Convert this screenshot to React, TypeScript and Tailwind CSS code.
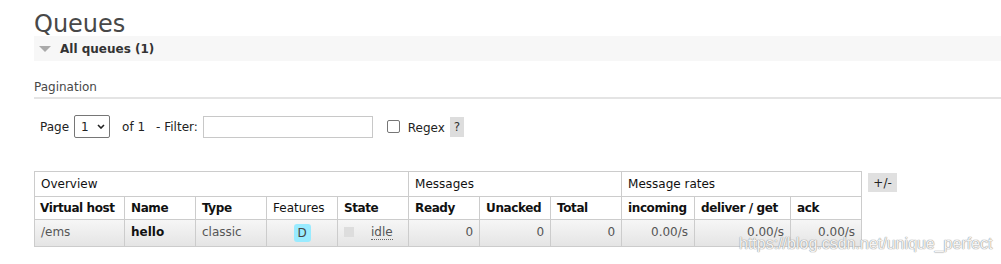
import React from 'react'

const cols = [90, 71, 71, 71, 71, 71, 71, 71, 73, 96, 71]

export default function App() {
    return (
        <div className="relative w-[1001px] h-[264px] overflow-hidden bg-white font-['DejaVu_Sans','Verdana',sans-serif] text-[12px] text-[#484848]">
            <div className="pl-[34px]">
                {/* Page title */}
                <h1 className="pt-[10px] text-[24px] leading-[28px] text-[#484848]">Queues</h1>

                {/* Section header */}
                <div className="mt-[-2px] flex h-[25px] items-center bg-[#f7f7f7] pl-[5px]">
                    <svg width="12" height="6" viewBox="0 0 12 6" className="mt-[1px]">
                        <path d="M0 0 L12 0 L6 6 Z" fill="#aaaaaa" />
                    </svg>
                    <span className="ml-[9px] font-bold text-[12px] text-[#333]">All queues (1)</span>
                </div>

                {/* Pagination */}
                <div className="mt-[19px] border-b-2 border-[#e4e4e4] pb-[3px] leading-[14px] text-[#484848]">Pagination</div>

                <div className="mt-[16px] flex h-[23px] items-center pl-[6px] text-[#222]">
                    <span>Page</span>
                    <div className="ml-[5px] flex h-[23px] w-[36px] items-center rounded-[2px] border border-[#767676] bg-white pl-[6px]">
                        <span>1</span>
                        <svg width="8" height="5" viewBox="0 0 8 5" className="ml-[8px]">
                            <path d="M1 1 L4 4 L7 1" fill="none" stroke="#222" strokeWidth="1.6" />
                        </svg>
                    </div>
                    <span className="ml-[12px]">of 1</span>
                    <span className="ml-[11px]">- Filter:</span>
                    <div className="ml-[5px] h-[22px] w-[170px] border border-[#c8c8c8] bg-white" />
                    <div className="ml-[14px] h-[13px] w-[13px] rounded-[2px] border border-[#767676] bg-white" />
                    <span className="ml-[8px] mt-[3px]">Regex</span>
                    <span className="ml-[5px] flex h-[20px] w-[14px] items-center justify-center bg-[#dddddd] text-[#333]">?</span>
                </div>

                {/* Table */}
                <div className="mt-[33px] flex items-start">
                    <table className="table-fixed border-collapse whitespace-nowrap" style={{ width: 828 }}>
                        <colgroup>
                            {cols.map((w, i) => (
                                <col key={i} style={{ width: w }} />
                            ))}
                        </colgroup>
                        <thead>
                            <tr className="h-[25px]">
                                <th colSpan={5} className="border border-[#cccccc] px-[6px] text-left font-normal text-[#111]">Overview</th>
                                <th colSpan={3} className="border border-[#cccccc] px-[6px] text-left font-normal text-[#111]">Messages</th>
                                <th colSpan={3} className="border border-[#cccccc] px-[6px] text-left font-normal text-[#111]">Message rates</th>
                            </tr>
                            <tr className="h-[23px] text-[#111] tracking-[-0.4px]">
                                <th className="border border-[#cccccc] pl-[5px] pr-0 text-left font-bold">Virtual host</th>
                                <th className="border border-[#cccccc] px-[6px] text-left font-bold">Name</th>
                                <th className="border border-[#cccccc] px-[6px] text-left font-bold">Type</th>
                                <th className="border border-[#cccccc] px-[6px] text-left font-normal tracking-normal">Features</th>
                                <th className="border border-[#cccccc] px-[6px] text-left font-bold">State</th>
                                <th className="border border-[#cccccc] px-[6px] text-left font-bold">Ready</th>
                                <th className="border border-[#cccccc] px-[6px] text-left font-bold">Unacked</th>
                                <th className="border border-[#cccccc] px-[6px] text-left font-bold">Total</th>
                                <th className="border border-[#cccccc] px-[6px] text-left font-bold">incoming</th>
                                <th className="border border-[#cccccc] px-[6px] text-left font-bold">deliver / get</th>
                                <th className="border border-[#cccccc] px-[6px] text-left font-bold">ack</th>
                            </tr>
                        </thead>
                        <tbody>
                            <tr className="h-[27px] bg-gradient-to-b from-[#f6f6f6] to-[#e4e4e4] text-[#555]">
                                <td className="border border-[#cccccc] px-[6px] pb-[3px]">/ems</td>
                                <td className="border border-[#cccccc] px-[6px] pb-[3px] font-bold text-[#111]">hello</td>
                                <td className="border border-[#cccccc] px-[6px] pb-[3px]">classic</td>
                                <td className="border border-[#cccccc] text-center">
                                    <span className="inline-flex h-[18px] w-[17px] items-center justify-center rounded-[3px] bg-[#99ebff] text-[#444]">D</span>
                                </td>
                                <td className="border border-[#cccccc] px-[6px] pb-[2px]">
                                    <div className="flex items-center">
                                        <span className="h-[10px] w-[10px] bg-[#dddddd]" />
                                        <span className="ml-[17px] border-b border-dotted border-[#666] leading-[14px]">idle</span>
                                    </div>
                                </td>
                                <td className="border border-[#cccccc] px-[6px] pb-[3px] text-right">0</td>
                                <td className="border border-[#cccccc] px-[6px] pb-[3px] text-right">0</td>
                                <td className="border border-[#cccccc] px-[6px] pb-[3px] text-right">0</td>
                                <td className="border border-[#cccccc] px-[6px] pb-[3px] text-right">0.00/s</td>
                                <td className="border border-[#cccccc] px-[6px] pb-[3px] text-right">0.00/s</td>
                                <td className="border border-[#cccccc] px-[6px] pb-[3px] text-right">0.00/s</td>
                            </tr>
                        </tbody>
                    </table>
                    <span className="ml-[6px] mt-[2px] flex h-[19px] w-[29px] items-center justify-center bg-[#e0e0e0] text-[#222]">+/-</span>
                </div>
            </div>

            {/* Watermark */}
            <div className="absolute left-[739px] top-[235px] font-['Liberation_Sans',Arial,sans-serif] text-[16px] leading-[18px] text-white/90 [text-shadow:0_0_1px_#8a8a8a,0_0_1px_#8a8a8a]">
                https://blog.csdn.net/unique_perfect
            </div>
        </div>
    )
}
